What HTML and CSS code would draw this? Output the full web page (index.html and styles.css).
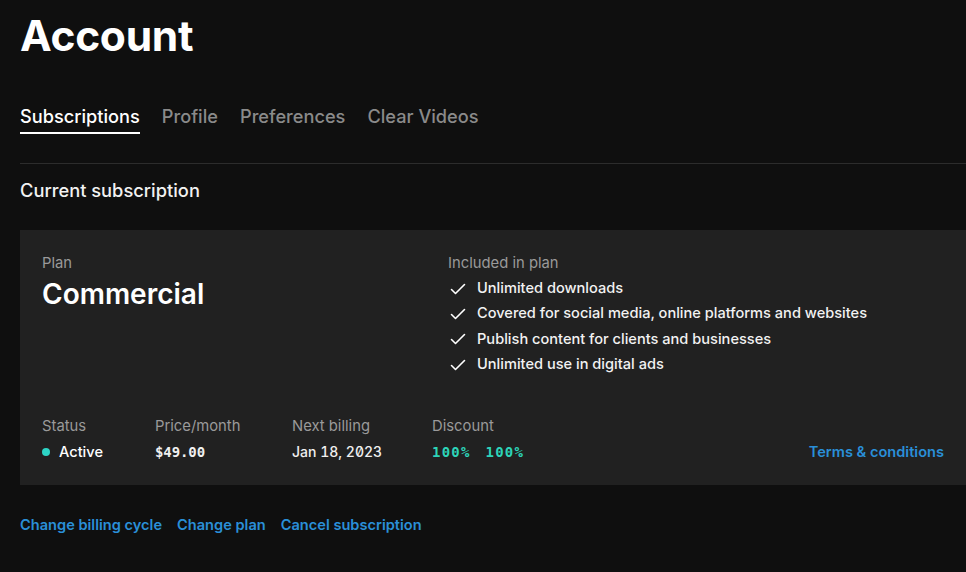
FILE: index.html
```html
<!DOCTYPE html>
<html>
<head>
<meta charset="utf-8">
<link rel="stylesheet" href="styles.css">
</head>
<body>
<div class="page">
  <h1 class="title">Account</h1>
  <nav class="tabs">
    <span class="tab active">Subscriptions</span>
    <span class="tab">Profile</span>
    <span class="tab">Preferences</span>
    <span class="tab">Clear Videos</span>
  </nav>
  <div class="divider"></div>
  <h2 class="section-title">Current subscription</h2>
  <div class="card">
    <div class="card-top">
      <div class="plan">
        <div class="label">Plan</div>
        <div class="plan-name">Commercial</div>
      </div>
      <div class="included">
        <div class="label">Included in plan</div>
        <ul class="features">
          <li><svg class="check" viewBox="0 0 16 16" width="16" height="16"><path d="M1.5 8.5l4 4 9-9" fill="none" stroke="#fff" stroke-width="1.6" stroke-linecap="round" stroke-linejoin="round"/></svg>Unlimited downloads</li>
          <li><svg class="check" viewBox="0 0 16 16" width="16" height="16"><path d="M1.5 8.5l4 4 9-9" fill="none" stroke="#fff" stroke-width="1.6" stroke-linecap="round" stroke-linejoin="round"/></svg>Covered for social media, online platforms and websites</li>
          <li><svg class="check" viewBox="0 0 16 16" width="16" height="16"><path d="M1.5 8.5l4 4 9-9" fill="none" stroke="#fff" stroke-width="1.6" stroke-linecap="round" stroke-linejoin="round"/></svg>Publish content for clients and businesses</li>
          <li><svg class="check" viewBox="0 0 16 16" width="16" height="16"><path d="M1.5 8.5l4 4 9-9" fill="none" stroke="#fff" stroke-width="1.6" stroke-linecap="round" stroke-linejoin="round"/></svg>Unlimited use in digital ads</li>
        </ul>
      </div>
    </div>
    <div class="card-bottom">
      <div class="stat stat-status">
        <div class="label">Status</div>
        <div class="value"><span class="dot"></span>Active</div>
      </div>
      <div class="stat stat-price">
        <div class="label">Price/month</div>
        <div class="value mono">$49.00</div>
      </div>
      <div class="stat stat-billing">
        <div class="label">Next billing</div>
        <div class="value date">Jan 18, 2023</div>
      </div>
      <div class="stat stat-discount">
        <div class="label">Discount</div>
        <div class="value mono teal"><span>100%</span><span>100%</span></div>
      </div>
      <a class="link terms">Terms &amp; conditions</a>
    </div>
  </div>
  <div class="actions">
    <a class="link">Change billing cycle</a>
    <a class="link">Change plan</a>
    <a class="link">Cancel subscription</a>
  </div>
</div>
</body>
</html>
```
FILE: styles.css
```css
* { box-sizing: border-box; }
html, body { margin: 0; padding: 0; background: #0f0f0f; }
body {
  font-family: Inter, "Noto Sans", sans-serif;
  color: #f2f2f2;
  width: 966px;
  height: 572px;
  overflow: hidden;
}
.page { padding: 8px 0 0 20px; }
.title {
  margin: 0;
  font-size: 42.5px;
  font-weight: 700;
  line-height: 56px;
  color: #fff;
  letter-spacing: -0.3px;
}
.tabs {
  display: flex;
  gap: 22px;
  margin-top: 41px;
}
.tab {
  font-size: 18.2px;
  font-weight: 500;
  color: #8a8a8a;
  line-height: 22px;
  padding-bottom: 5px;
  border-bottom: 2px solid transparent;
}
.tab.active { color: #fff; border-bottom-color: #fff; }
.divider { height: 1px; background: #2c2c2c; margin-top: 29px; }
.section-title {
  margin: 15px 0 0;
  font-size: 18.3px;
  font-weight: 500;
  line-height: 22px;
  color: #f2f2f2;
}
.card {
  margin-top: 29px;
  background: #212121;
  padding: 24px 22px 24px 22px;
  height: 255px;
  display: flex;
  flex-direction: column;
  justify-content: space-between;
}
.card-top { display: flex; }
.plan { width: 406px; }
.label { font-size: 14.8px; line-height: 18px; color: #9a9a9a; font-weight: 400; }
.plan-name { font-size: 28px; font-weight: 600; line-height: 36px; color: #fff; margin-top: 4px; }
.features { list-style: none; margin: 4px 0 0; padding: 0; }
.features li {
  display: flex;
  align-items: center;
  font-size: 14.6px;
  font-weight: 500;
  line-height: 25.3px;
  color: #f2f2f2;
}
.check { margin: 0 11px 0 2px; flex: none; }
.card-bottom { display: flex; align-items: flex-end; }
.stat { flex: none; }
.stat-status { width: 113px; }
.stat-price { width: 137px; }
.stat-billing { width: 140px; }
.value {
  font-size: 14.6px;
  font-weight: 500;
  line-height: 18px;
  margin-top: 8px;
  color: #fff;
  display: flex;
  align-items: center;
}
.mono { font-family: "DejaVu Sans Mono", monospace; font-size: 14px; font-weight: 700; color: #f0f0f0; letter-spacing: -0.1px; }
.date { font-size: 14px; font-feature-settings: "tnum", "zero"; font-variant-numeric: tabular-nums slashed-zero; color: #f0f0f0; }
.teal { color: #2dd4b9; gap: 15px; letter-spacing: 1.2px; }
.dot { width: 8px; height: 8px; border-radius: 50%; background: #2dd4c5; margin-right: 9px; }
.link { color: #2a8fd8; font-size: 14.6px; font-weight: 600; line-height: 18px; text-decoration: none; }
.terms { margin-left: auto; }
.actions { display: flex; gap: 15px; margin-top: 31px; }
```
